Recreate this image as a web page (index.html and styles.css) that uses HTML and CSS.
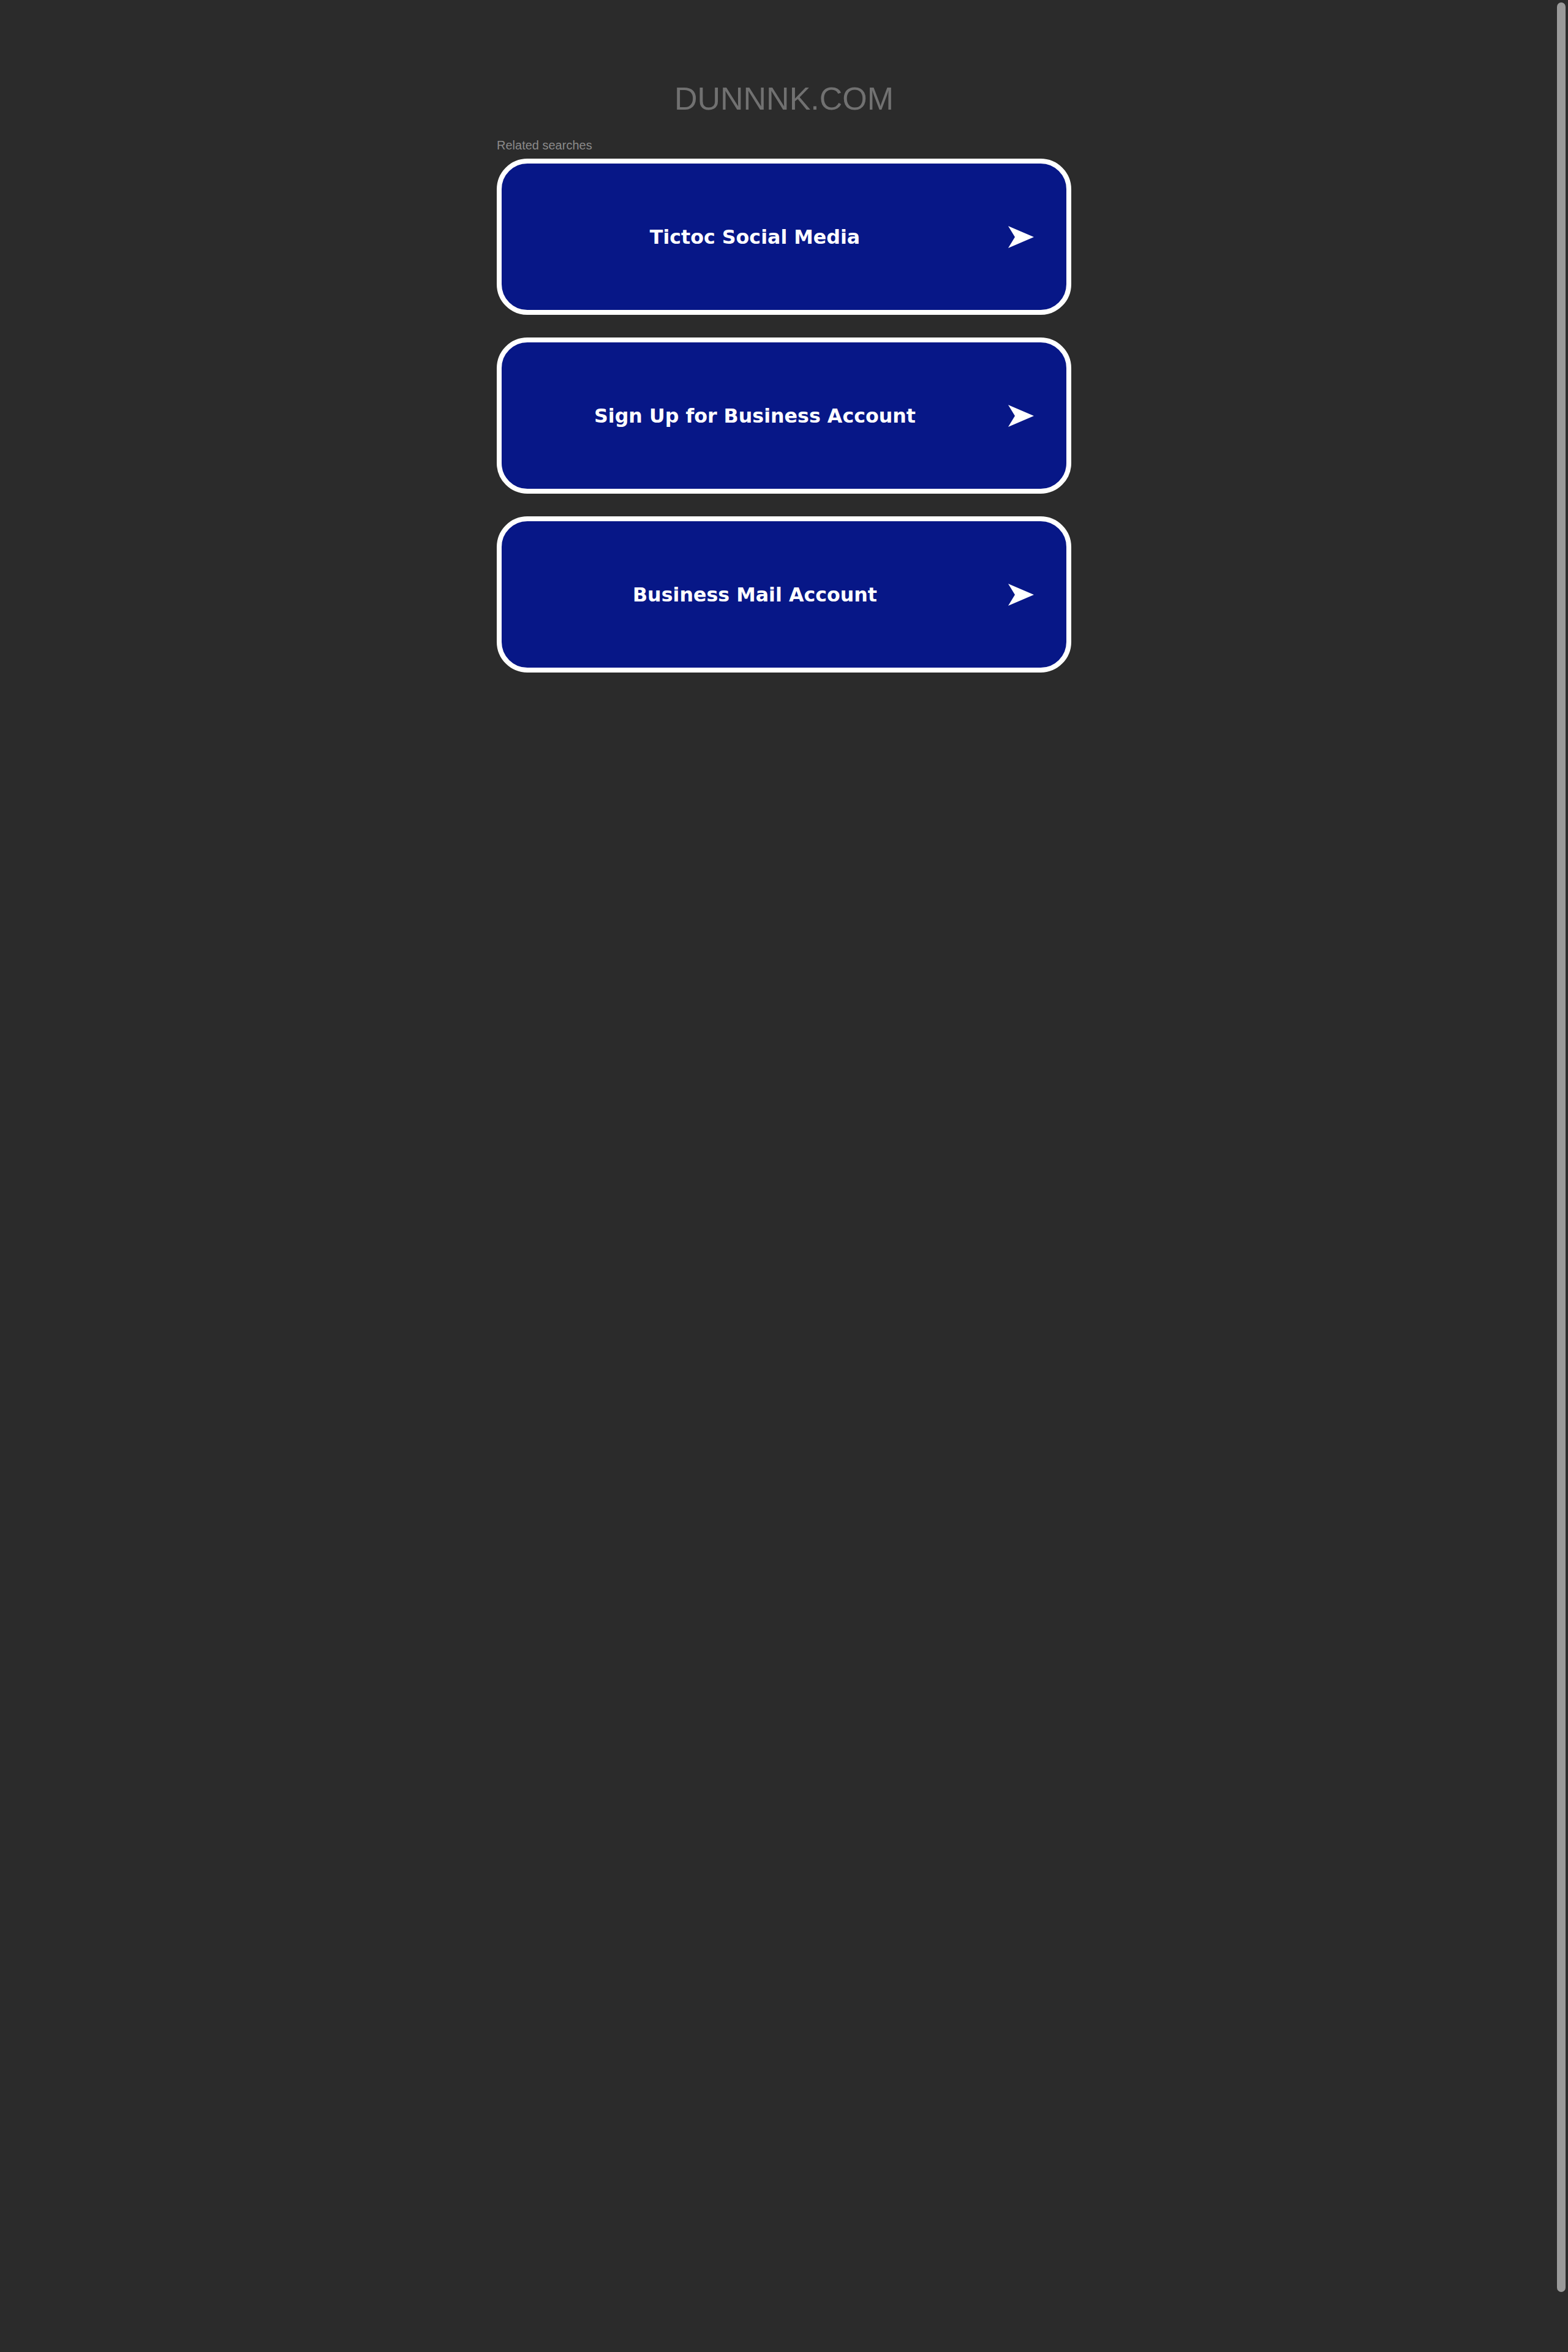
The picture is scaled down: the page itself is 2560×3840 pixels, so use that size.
FILE: index.html
```html
<!DOCTYPE html>
<html lang="en">
<head>
<meta charset="utf-8">
<title>dunnnk.com</title>
<link rel="stylesheet" href="styles.css">
</head>
<body>
<div class="page">
  <h1 class="domain">DUNNNK.COM</h1>
  <div class="related">
    <p class="related-title">Related searches</p>
    <div class="list">
      <a class="item" href="#"><span class="label">Tictoc Social Media</span><svg class="arrow" viewBox="0 0 42 36" width="42" height="36"><path d="M0 0 L42 18 L0 36 L11 18 Z" fill="#fff"/></svg></a>
      <a class="item" href="#"><span class="label">Sign Up for Business Account</span><svg class="arrow" viewBox="0 0 42 36" width="42" height="36"><path d="M0 0 L42 18 L0 36 L11 18 Z" fill="#fff"/></svg></a>
      <a class="item" href="#"><span class="label">Business Mail Account</span><svg class="arrow" viewBox="0 0 42 36" width="42" height="36"><path d="M0 0 L42 18 L0 36 L11 18 Z" fill="#fff"/></svg></a>
    </div>
  </div>
</div>
<div class="scroll-thumb"></div>
</body>
</html>
```

FILE: styles.css
```css
html, body {
  margin: 0;
  padding: 0;
  height: 100%;
  overflow: hidden;
  background: #2b2b2b;
}
.page {
  display: flex;
  flex-direction: column;
  align-items: center;
  padding-top: 132px;
}
.domain {
  margin: 0;
  font-family: "Liberation Sans", Arial, sans-serif;
  font-weight: normal;
  font-size: 52px;
  line-height: 59px;
  color: #717171;
}
.related {
  width: 938px;
  margin-top: 34px;
}
.related-title {
  margin: 0 0 10px 0;
  font-family: "Liberation Sans", Arial, sans-serif;
  font-size: 20px;
  line-height: 24px;
  color: #8a8a8a;
}
.list {
  display: flex;
  flex-direction: column;
  gap: 37px;
}
.item {
  box-sizing: border-box;
  height: 255px;
  display: flex;
  align-items: center;
  background: #071787;
  border: 8px solid #ffffff;
  border-radius: 50px;
  text-decoration: none;
  padding-right: 53px;
}
.label {
  flex: 1;
  text-align: center;
  font-family: "DejaVu Sans", Verdana, sans-serif;
  font-weight: bold;
  font-size: 31.7px;
  color: #ffffff;
}
.arrow {
  display: block;
  flex: none;
}
.scroll-thumb {
  position: fixed;
  top: 4px;
  right: 4px;
  width: 14px;
  height: 3738px;
  border-radius: 7px;
  background: #9a9a9a;
}
```
